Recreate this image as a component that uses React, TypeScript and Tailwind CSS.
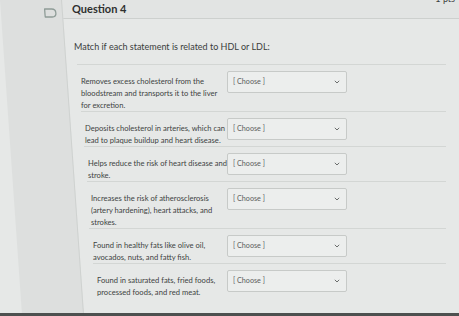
import React from "react";

type Row = { lines: string[]; ml: string; w: string };

const rows: Row[] = [
  {
    lines: [
      "Removes excess cholesterol from the",
      "bloodstream and transports it to the liver",
      "for excretion.",
    ],
    ml: "ml-[15px]",
    w: "w-[150px]",
  },
  {
    lines: [
      "Deposits cholesterol in arteries, which can",
      "lead to plaque buildup and heart disease.",
    ],
    ml: "ml-[19px]",
    w: "w-[146px]",
  },
  {
    lines: ["Helps reduce the risk of heart disease and", "stroke."],
    ml: "ml-[22px]",
    w: "w-[143px]",
  },
  {
    lines: [
      "Increases the risk of atherosclerosis",
      "(artery hardening), heart attacks, and",
      "strokes.",
    ],
    ml: "ml-[25px]",
    w: "w-[140px]",
  },
  {
    lines: ["Found in healthy fats like olive oil,", "avocados, nuts, and fatty fish."],
    ml: "ml-[27px]",
    w: "w-[138px]",
  },
  {
    lines: ["Found in saturated fats, fried foods,", "processed foods, and red meat."],
    ml: "ml-[31px]",
    w: "w-[134px]",
  },
];

function Chevron() {
  return (
    <svg width="6" height="4" viewBox="0 0 6 4" fill="none">
      <path d="M0.8 0.8 L3 3 L5.2 0.8" stroke="#6b6e6d" strokeWidth="1" />
    </svg>
  );
}

function Select() {
  return (
    <div className="flex h-[22px] w-[120px] shrink-0 items-center justify-between rounded-[2px] border border-[#c7cac8] bg-[#eceeed] pl-[5px] pr-[6px]">
      <span className="text-[7.2px] text-[#5a5d5c]">[ Choose ]</span>
      <Chevron />
    </div>
  );
}

export default function App() {
  return (
    <div
      className="flex h-[316px] w-[459px] flex-col overflow-hidden bg-[#e6e8e7]"
      style={{ fontFamily: "Lato, 'Open Sans', sans-serif" }}
    >
      <div className="flex h-[313px]">
        <div className="relative w-[62px] shrink-0 origin-top skew-x-[4deg] border-r border-[#cfd2d0] bg-[#dddfde]">
          <svg
            className="ml-[43px] mt-[8px]"
            width="13"
            height="10"
            viewBox="0 0 13 10"
            fill="none"
          >
            <path
              d="M1 1 H8 Q12 1 12 5 Q12 9 8 9 H1 Z"
              stroke="#8e9c97"
              strokeWidth="1.3"
              strokeLinejoin="round"
            />
          </svg>
        </div>
        <div className="flex min-w-0 flex-1 flex-col">
          <div className="flex h-[19px] shrink-0 items-center justify-between border-b border-[#cdd0ce] bg-[#e2e4e3] pl-[10px] pr-[4px]">
            <span className="text-[11px] font-bold text-[#2e302f]">Question 4</span>
            <span className="-mt-[20px] text-[9px] text-[#3a3c3b]">1 pts</span>
          </div>
          <div className="pl-[12px] pt-[22px] text-[9px] leading-[12px] text-[#3a3d3c]">
            Match if each statement is related to HDL or LDL:
          </div>
          <div className="mt-[11px] flex flex-col">
            {rows.map((r, i) => (
              <div
                key={i}
                className={`${r.ml} mr-[13px] flex border-t border-[#d3d6d4] pt-[6px]`}
              >
                <div
                  className={`${r.w} shrink-0 pl-[4px] pt-[4px] text-[7.6px] leading-[12px] text-[#404342] whitespace-nowrap`}
                >
                  {r.lines.map((l, j) => (
                    <div key={j}>{l}</div>
                  ))}
                </div>
                <Select />
              </div>
            ))}
          </div>
        </div>
      </div>
      <div className="h-[3px] bg-[#4d504f]" />
    </div>
  );
}
